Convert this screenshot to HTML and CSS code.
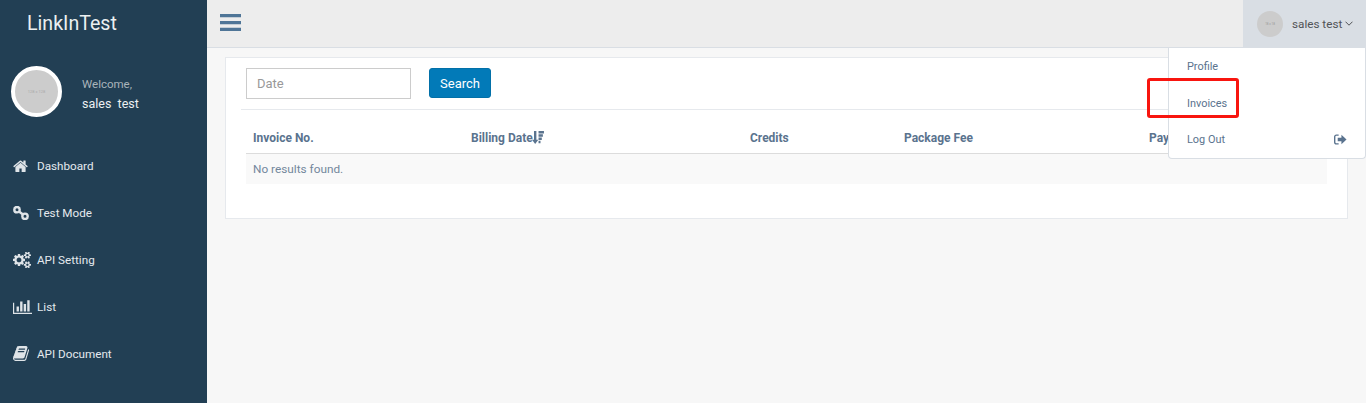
FILE: index.html
```html
<!DOCTYPE html>
<html lang="en">
<head>
<meta charset="utf-8">
<title>LinkInTest</title>
<link rel="stylesheet" href="styles.css">
</head>
<body>
<div class="app">
  <aside class="sidebar">
    <div class="brand">LinkInTest</div>
    <div class="profile">
      <div class="avatar-large"><span>128 x 128</span></div>
      <div class="welcome">
        <div class="welcome-label">Welcome,</div>
        <div class="welcome-name">sales&nbsp; test</div>
      </div>
    </div>
    <nav class="nav">
      <a class="nav-item">
        <svg class="nav-icon icon-home" viewBox="60 190 1670 1350"><path d="M1472 992v480q0 26-19 45t-45 19h-384v-384h-256v384h-384q-26 0-45-19t-19-45v-480q0-1 .5-3t.5-3l575-474 575 474q1 2 1 6zm223-69l-62 74q-8 9-21 11h-3q-13 0-21-7l-692-577-692 577q-12 8-24 7-13-2-21-11l-62-74q-8-10-7-23.500t11-21.500l719-599q32-26 76-26t76 26l244 204v-195q0-14 9-23t23-9h192q14 0 23 9t9 23v408l219 182q10 8 11 21.500t-7 23.500z"/></svg>
        <span>Dashboard</span>
      </a>
      <a class="nav-item">
        <svg class="nav-icon icon-link" viewBox="0 0 16 14"><g fill="none" stroke="currentColor" stroke-width="2.400"><circle cx="4" cy="3.700" r="2.700"/><circle cx="12" cy="10.300" r="2.700"/><path d="M6 5.500 10 8.500"/></g></svg>
        <span>Test Mode</span>
      </a>
      <a class="nav-item">
        <svg class="nav-icon icon-cogs" viewBox="0 100 1920 1600"><path d="M896 896q0-106-75-181t-181-75-181 75-75 181 75 181 181 75 181-75 75-181zm768 512q0-52-38-90t-90-38-90 38-38 90q0 53 37.500 90.500t90.500 37.500 90.500-37.500 37.500-90.500zm0-1024q0-52-38-90t-90-38-90 38-38 90q0 53 37.500 90.500t90.500 37.500 90.500-37.500 37.500-90.500zm-384 421v185q0 10-7 19.500t-16 10.500l-155 24q-11 35-32 76 34 48 90 115 7 11 7 20 0 12-7 19-23 30-82.500 89.500t-78.500 59.500q-11 0-21-7l-115-90q-37 19-77 31-11 108-23 155-7 24-30 24h-186q-11 0-20-7.500t-10-17.500l-23-153q-34-10-75-31l-118 89q-7 7-20 7-11 0-21-8-144-133-144-160 0-9 7-19 10-14 41-53t47-61q-23-44-35-82l-152-24q-10-1-17-9.500t-7-19.500v-185q0-10 7-19.500t16-10.500l155-24q11-35 32-76-34-48-90-115-7-11-7-20 0-12 7-20 22-30 82-89t79-59q11 0 21 7l115 90q34-18 77-32 11-108 23-154 7-24 30-24h186q11 0 20 7.500t10 17.500l23 153q34 10 75 31l118-89q8-7 20-7 11 0 21 8 144 133 144 160 0 8-7 19-12 16-42 54t-45 60q23 48 34 82l152 23q10 2 17 10.500t7 19.500zm640 533v140q0 16-149 31-12 27-30 52 51 113 51 138 0 4-4 7-122 71-124 71-8 0-46-47t-52-68q-20 2-30 2t-30-2q-14 21-52 68t-46 47q-2 0-124-71-4-3-4-7 0-25 51-138-18-25-30-52-149-15-149-31v-140q0-16 149-31 13-29 30-52-51-113-51-138 0-4 4-7 4-2 35-20t59-34 30-16q8 0 46 46.500t52 67.500q20-2 30-2t30 2q51-71 92-112l6-2q4 0 124 70 4 3 4 7 0 25-51 138 17 23 30 52 149 15 149 31zm0-1024v140q0 16-149 31-12 27-30 52 51 113 51 138 0 4-4 7-122 71-124 71-8 0-46-47t-52-68q-20 2-30 2t-30-2q-14 21-52 68t-46 47q-2 0-124-71-4-3-4-7 0-25 51-138-18-25-30-52-149-15-149-31v-140q0-16 149-31 13-29 30-52-51-113-51-138 0-4 4-7 4-2 35-20t59-34 30-16q8 0 46 46.500t52 67.500q20-2 30-2t30 2q51-71 92-112l6-2q4 0 124 70 4 3 4 7 0 25-51 138 17 23 30 52 149 15 149 31z"/></svg>
        <span>API Setting</span>
      </a>
      <a class="nav-item">
        <svg class="nav-icon icon-chart" viewBox="0 128 2048 1536" preserveAspectRatio="none"><path d="M640 896v512h-256v-512h256zm384-512v1024h-256v-1024h256zm1024 1152v128h-2048v-1152h128v1024h1920zm-640-896v768h-256v-768h256zm384-384v1152h-256v-1152h256z"/></svg>
        <span>List</span>
      </a>
      <a class="nav-item">
        <svg class="nav-icon icon-book" viewBox="0 128 1664 1536"><path d="M1639 478q40 57 18 129l-275 906q-19 64-76.500 107.500t-122.500 43.500h-923q-77 0-148.500-53.500t-99.500-131.500q-24-67-2-127 0-4 3-27t4-37q1-8-3-21.500t-3-19.500q2-11 8-21t16.500-23.500 16.500-23.500q23-38 45-91.500t30-91.500q3-10 .5-30t-.5-28q3-11 17-28t17-23q21-36 42-92t25-90q1-9-2.500-32t.5-28q4-13 22-30.500t22-22.500q19-26 42.500-84.500t27.500-96.500q1-8-3-25.500t-2-26.500q2-8 9-18t18-23 17-21q8-12 16.500-30.500t15-35 16-36 19.500-32 26.500-23.500 36-11.500 47.500 5.500l-1 3q38-9 51-9h761q74 0 114 56t18 130l-274 906q-36 119-71.500 153.500t-128.500 34.500h-869q-27 0-38 15-11 16-1 43 24 70 144 70h923q29 0 56-15.500t35-41.500l300-987q7-22 5-57 38 15 59 43zm-1064 2q-4 13 2 22.500t20 9.500h608q13 0 25.500-9.500t16.500-22.500l21-64q4-13-2-22.500t-20-9.500h-608q-13 0-25.500 9.500t-16.500 22.500zm-83 256q-4 13 2 22.500t20 9.500h608q13 0 25.500-9.500t16.500-22.500l21-64q4-13-2-22.500t-20-9.500h-608q-13 0-25.500 9.500t-16.500 22.500z"/></svg>
        <span>API Document</span>
      </a>
    </nav>
  </aside>

  <div class="main">
    <header class="topbar">
      <button class="menu-toggle" type="button" aria-label="Menu">
        <svg viewBox="0 0 21 17" width="21" height="17"><path d="M0 0h21v3.300H0zM0 6.900h21v3.300H0zM0 13.700h21V17H0z"/></svg>
      </button>
      <div class="user-toggle">
        <div class="avatar-small"><span>18 x 18</span></div>
        <span class="user-name">sales test</span>
        <svg class="chevron" viewBox="0 0 8 5" width="8" height="5"><path d="M.5.700 4 4.200 7.500.700" fill="none" stroke="currentColor" stroke-width="1"/></svg>
      </div>
    </header>

    <section class="content">
      <div class="panel">
        <form class="search-row">
          <input class="date-input" type="text" placeholder="Date">
          <button class="search-btn" type="button">Search</button>
        </form>
        <table class="grid">
          <colgroup>
            <col class="col-invoice"><col class="col-date"><col class="col-credits"><col class="col-fee"><col>
          </colgroup>
          <thead>
            <tr>
              <th>Invoice No.</th>
              <th>Billing Date<svg class="sort-icon" viewBox="0 0 11 12" width="12" height="13"><path d="M1.800 0h2.200v8H5.800L2.900 12 0 8h1.800zM6 0h5v2.200H6zM6 3h4v2.200H6zM6 6h3v2.200H6zM6 9h1.800v2.200H6z"/></svg></th>
              <th>Credits</th>
              <th>Package Fee</th>
              <th>Pay</th>
            </tr>
          </thead>
          <tbody>
            <tr><td colspan="5">No results found.</td></tr>
          </tbody>
        </table>
      </div>
    </section>
  </div>

  <div class="dropdown">
    <a class="dropdown-item">Profile</a>
    <a class="dropdown-item">Invoices</a>
    <a class="dropdown-item">Log Out
      <svg class="logout-icon" viewBox="0 0 14 11" width="13" height="11"><path d="M5 0H2.500C1.100 0 0 1.100 0 2.500v6C0 9.900 1.100 11 2.500 11H5V9.500H2.500c-.6 0-1-.4-1-1v-6c0-.6.400-1 1-1H5z"/><path d="M8 .5 13.500 5.500 8 10.500V7.500H4v-4h4z"/></svg>
    </a>
  </div>
  <div class="annotation"></div>
</div>
</body>
</html>
```
FILE: styles.css
```css
* { box-sizing: border-box; }
html, body { margin: 0; height: 100%; overflow: hidden; }
body { font-family: Roboto, "Liberation Sans", sans-serif; font-size: 12px; color: #5a738e; background: #f7f7f7; }

.app { position: relative; display: flex; width: 100%; height: 403px; overflow: hidden; }

.sidebar { flex: 0 0 207px; background: #223f54; color: #ecf0f1; }
.brand { height: 47px; padding: 12px 0 0 27px; font-size: 19.600px; line-height: 24px; color: #ecf0f1; }
.profile { display: flex; align-items: flex-start; height: 95px; padding: 19px 0 0 11px; }
.avatar-large { display: flex; align-items: center; justify-content: center; width: 51px; height: 51px; border-radius: 50%; background: #ccc; border: 4px solid #fff; }
.avatar-large span { font-size: 4px; color: #aaa; white-space: nowrap; }
.welcome { margin: 8px 0 0 20px; }
.welcome-label { color: #a9b3ba; font-size: 11.500px; line-height: 20px; }
.welcome-name { color: #ecf0f1; font-size: 12.500px; line-height: 20px; }

.nav { display: flex; flex-direction: column; }
.nav-item { display: flex; align-items: center; height: 47px; padding-left: 13px; font-size: 11.700px; color: #e4e9ee; }
.nav-icon { fill: #dfe4e8; color: #dfe4e8; }
.icon-home { flex: 0 0 15px; width: 15px; height: 12px; margin-right: 9px; }
.icon-link { flex: 0 0 16px; width: 16px; height: 14px; margin-right: 8px; }
.icon-cogs { flex: 0 0 18px; width: 18px; height: 16px; margin-right: 6px; }
.icon-chart { flex: 0 0 19px; width: 19px; height: 15px; margin-right: 5px; }
.icon-book { flex: 0 0 16px; width: 16px; height: 15px; margin-right: 8px; }

.main { flex: 1; display: flex; flex-direction: column; min-width: 0; }
.topbar { display: flex; align-items: stretch; justify-content: space-between; height: 48px; background: #ededed; border-bottom: 1px solid #d9dee4; }
.menu-toggle { align-self: center; padding: 0; margin: 0 0 2px 13px; background: none; border: 0; line-height: 0; }
.menu-toggle svg { fill: #4f7597; }
.user-toggle { display: flex; align-items: center; width: 123px; padding-left: 14px; background: #d9dee4; }
.avatar-small { display: flex; align-items: center; justify-content: center; width: 26px; height: 26px; border-radius: 50%; background: #ccc; }
.avatar-small span { font-size: 3px; color: #999; white-space: nowrap; }
.user-name { margin-left: 9px; color: #515356; font-size: 11.700px; }
.chevron { margin-left: 3px; color: #515356; }

.content { padding: 9px 18px 0; }
.panel { height: 162px; padding: 10px 20px 0; background: #fff; border: 1px solid #e6e9ed; }
.search-row { position: relative; display: flex; gap: 18px; height: 42px; margin: 0 -20px; padding: 0 20px; }
.search-row::after { content: ""; position: absolute; left: 15px; right: 0; bottom: 0; border-bottom: 1px solid #e6e9ed; }
.date-input { width: 165px; height: 31px; padding: 0 10px; font: 13px Roboto, sans-serif; color: #555; border: 1px solid #ccc; outline: 0; border-radius: 0; }
.date-input::placeholder { color: #999; opacity: 1; }
.search-btn { width: 62px; height: 30px; padding: 0; font: 13px Roboto, sans-serif; color: #fff; background: #027ab8; border: 1px solid #0270a8; border-radius: 3px; }

.grid { width: 100%; margin-top: 10px; table-layout: fixed; border-collapse: collapse; font-size: 12px; }
.col-invoice { width: 218px; }
.col-date { width: 279px; }
.col-credits { width: 154px; }
.col-fee { width: 245px; }
.grid th { height: 33px; padding: 0 7px 8px; vertical-align: bottom; text-align: left; font-weight: 700; color: #5a738e; white-space: nowrap; border-bottom: 1px solid #dcdcdc; }
.grid td { height: 31px; padding: 0 7px; background: #f9f9f9; color: #73879c; font-size: 11.800px; }
.sort-icon { vertical-align: -2px; fill: #5a738e; margin-left: -1px; }

.dropdown { position: absolute; top: 48px; right: 0; width: 198px; height: 111px; background: #fff; border: 1px solid #d9dee4; border-top: 0; border-radius: 0 0 4px 4px; }
.dropdown-item { display: flex; align-items: center; justify-content: space-between; height: 37px; padding: 0 18px; color: #5a738e; font-size: 10.900px; }
.dropdown-item:last-child { height: 35px; }
.logout-icon { fill: #5a738e; }

.annotation { position: absolute; left: 1147px; top: 78px; width: 92px; height: 40px; border: 3px solid #f8150f; border-radius: 3px; }
```
